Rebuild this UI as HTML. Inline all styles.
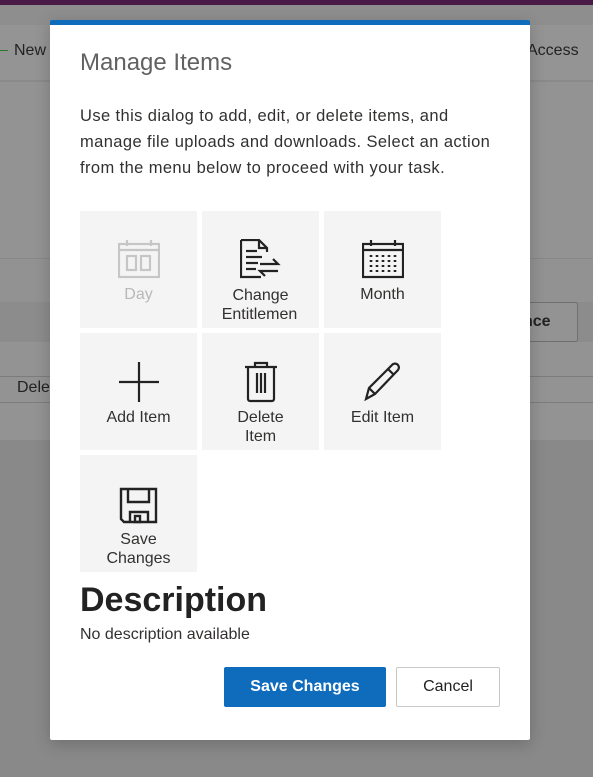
<!DOCTYPE html>
<html><head><style>
body{margin:0;width:593px;height:777px;overflow:hidden;background:#898989;font-family:"Segoe UI","Liberation Sans",sans-serif;position:relative}
.b{position:absolute;left:0;width:593px}
.dlg{position:absolute;left:50px;top:20px;width:480px;height:720px;background:#fff;border-top:5px solid #0f6cbd;box-sizing:border-box;border-radius:2px;box-shadow:0 4px 16px rgba(0,0,0,.2)}
.t{position:absolute;font-size:16px;color:#323130}
.tile{position:absolute;width:117px;height:117px;background:#f4f4f4;text-align:center;font-size:16px;color:#323130;line-height:19px}
.tile svg{position:absolute;left:38px;top:28px}
.tile .l{position:absolute;left:0;right:0;top:74px}
.btn{position:absolute;height:40px;box-sizing:border-box;border-radius:2px;font-size:16px;text-align:center;line-height:38px}
</style></head><body>
<div class="b" style="top:0;height:5px;background:#4a1a47"></div>
<div class="b" style="top:5px;height:20px;background:#8e8e8e"></div>
<div class="b" style="top:25px;height:55px;background:#949494"></div>
<div class="b" style="top:80px;height:2px;background:#8a8a8a"></div>
<div class="b" style="top:82px;height:176px;background:#939393"></div>
<div class="b" style="top:258px;height:1px;background:#888"></div>
<div class="b" style="top:259px;height:43px;background:#929292"></div>
<div class="b" style="top:302px;height:40px;background:#8c8c8c"></div>
<div class="b" style="top:342px;height:98px;background:#939393"></div>
<div class="b" style="top:376px;height:1px;background:#7c7c7c"></div>
<div class="b" style="top:402px;height:1px;background:#7c7c7c"></div>
<div style="position:absolute;left:0;top:50px;width:8px;height:1px;background:#2a7a2a"></div>
<div style="position:absolute;left:14px;top:42px;font-size:16px;color:#222">New</div>
<div style="position:absolute;left:527px;top:42px;font-size:16px;color:#222">Access</div>
<div style="position:absolute;left:17px;top:379px;font-size:16px;color:#222">Dele</div>
<div style="position:absolute;left:500px;top:302px;width:78px;height:40px;border:1px solid #707070;border-radius:2px;font-size:16px;font-weight:600;color:#222;line-height:38px;padding-left:22px;box-sizing:border-box;overflow:hidden;background:#939393">nce</div>

<div class="dlg"></div>
<div class="t" style="left:80px;top:49px;font-size:24px;color:#616161">Manage Items</div>
<div class="t" style="left:80px;top:103px;line-height:26px;font-size:16.5px;letter-spacing:0.4px;white-space:nowrap">Use this dialog to add, edit, or delete items, and<br>manage file uploads and downloads. Select an action<br>from the menu below to proceed with your task.</div>

<div class="tile" style="left:80px;top:211px;color:#b8b8b8"><svg width="42" height="40" viewBox="0 0 42 40" fill="none" stroke="#c6c6c6" stroke-width="2.2"><rect x="1" y="5" width="40" height="33"/><line x1="1" y1="11" x2="41" y2="11"/><line x1="9" y1="1" x2="9" y2="7"/><line x1="33" y1="1" x2="33" y2="7"/><rect x="9" y="17" width="9" height="14"/><rect x="23" y="17" width="9" height="14"/></svg><div class="l">Day</div></div>
<div class="tile" style="left:202px;top:211px"><svg width="42" height="42" viewBox="0 0 42 42" fill="none" stroke="#222" stroke-width="2.2"><path d="M1 1h18l8 8v4M1 1v37h20"/><path d="M19 1v8h8"/><line x1="6" y1="12" x2="17" y2="12"/><line x1="6" y1="18" x2="22" y2="18"/><line x1="6" y1="24" x2="18" y2="24"/><line x1="6" y1="30" x2="16" y2="30"/><path d="M20 25h18l-5-5M38 32H20l5 5"/></svg><div class="l" style="top:75px">Change<br><span style="margin-left:-2px">Entitlemen</span></div></div>
<div class="tile" style="left:324px;top:211px"><svg width="42" height="40" viewBox="0 0 42 40" fill="none" stroke="#222" stroke-width="2.2"><rect x="1" y="5" width="40" height="33"/><line x1="1" y1="11" x2="41" y2="11"/><line x1="9" y1="1" x2="9" y2="7"/><line x1="33" y1="1" x2="33" y2="7"/><g stroke-width="2.6" stroke-dasharray="2 3"><line x1="9" y1="16" x2="9" y2="33"/><line x1="15" y1="16" x2="15" y2="33"/><line x1="21" y1="16" x2="21" y2="33"/><line x1="27" y1="16" x2="27" y2="33"/><line x1="33" y1="16" x2="33" y2="33"/></g></svg><div class="l">Month</div></div>

<div class="tile" style="left:80px;top:333px"><svg width="42" height="42" viewBox="0 0 42 42" fill="none" stroke="#222" stroke-width="2.2"><line x1="21" y1="1" x2="21" y2="41"/><line x1="1" y1="21" x2="41" y2="21"/></svg><div class="l" style="top:75px">Add Item</div></div>
<div class="tile" style="left:202px;top:333px"><svg width="42" height="42" viewBox="0 0 42 42" fill="none" stroke="#222" stroke-width="2.2"><path d="M5 6h32M15 6V2h12v4M8 6v32a2 2 0 0 0 2 2h22a2 2 0 0 0 2-2V6"/><line x1="17" y1="12" x2="17" y2="32"/><line x1="21" y1="12" x2="21" y2="32"/><line x1="25" y1="12" x2="25" y2="32"/></svg><div class="l" style="top:75px">Delete<br>Item</div></div>
<div class="tile" style="left:324px;top:333px"><svg width="42" height="42" viewBox="0 0 42 42" fill="none" stroke="#222" stroke-width="2.2"><path d="M4 38l3-11L30 4a3.5 3.5 0 0 1 6 5L13 33z"/><line x1="7" y1="27" x2="13" y2="33"/><line x1="26" y1="8" x2="32" y2="14"/></svg><div class="l" style="top:75px">Edit Item</div></div>

<div class="tile" style="left:80px;top:455px"><svg width="42" height="42" viewBox="0 0 42 42" fill="none" stroke="#222" stroke-width="2.4" style="top:31px"><path d="M3 3h35v33H6l-3-3z"/><path d="M10 3v13h21V3"/><path d="M12 36v-10h18v10"/><rect x="17" y="30" width="5" height="6"/></svg><div class="l" style="top:75px">Save<br>Changes</div></div>

<div class="t" style="left:80px;top:581px;font-size:34px;font-weight:700;color:#222">Description</div>
<div class="t" style="left:80px;top:626px">No description available</div>
<div class="btn" style="left:224px;top:667px;width:162px;background:#0f6cbd;color:#fff;border:1px solid #0f6cbd;font-weight:600">Save Changes</div>
<div class="btn" style="left:396px;top:667px;width:104px;background:#fff;color:#222;border:1px solid #c8c8c8">Cancel</div>
</body></html>
